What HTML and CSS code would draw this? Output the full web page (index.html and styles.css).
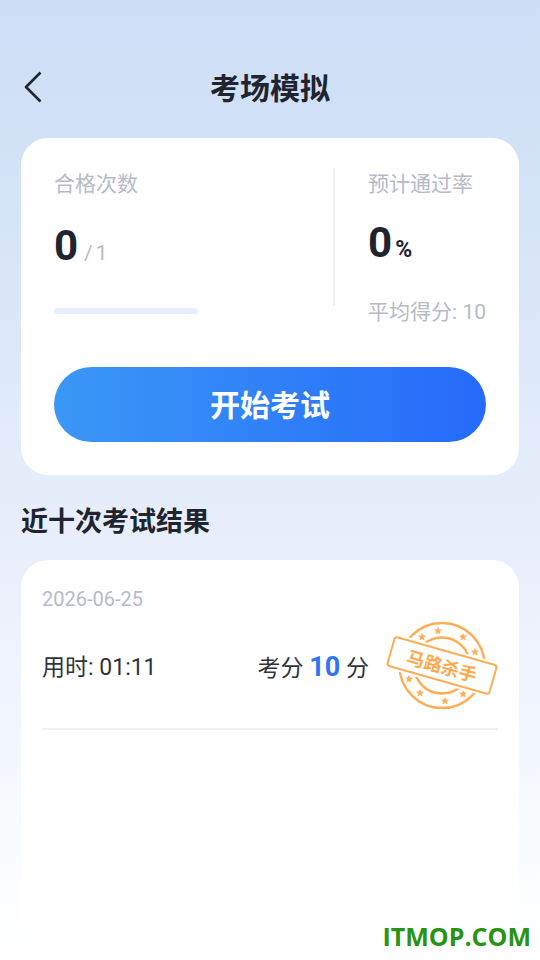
FILE: index.html
```html
<!DOCTYPE html>
<html lang="zh-CN">
<head>
<meta charset="utf-8">
<meta name="viewport" content="width=device-width, initial-scale=1">
<title>考场模拟</title>
<link rel="stylesheet" href="styles.css">
</head>
<body>
<header class="topbar">
  <button class="back" type="button" aria-label="返回">
    <svg width="24" height="34" viewBox="0 0 24 34" fill="none" stroke="currentColor" stroke-width="2.6" stroke-linejoin="round"><path d="M20.5 2.5 6 17l14.5 14.5"/></svg>
  </button>
  <h1 class="title">考场模拟</h1>
</header>
<main class="content">
  <section class="card summary">
    <div class="stats">
      <div class="stat passed">
        <div class="label">合格次数</div>
        <div class="figure"><strong>0</strong><span class="total"><span>/</span><span>1</span></span></div>
        <div class="track"></div>
      </div>
      <div class="stat rate">
        <div class="label">预计通过率</div>
        <div class="figure"><strong>0</strong><span class="unit">%</span></div>
        <div class="label">平均得分: 10</div>
      </div>
    </div>
    <button class="start" type="button">开始考试</button>
  </section>
  <h2 class="heading">近十次考试结果</h2>
  <section class="card results">
    <article class="result">
      <time class="date" datetime="2026-06-25">2026-06-25</time>
      <div class="row">
        <div class="time">用时: 01:11</div>
        <div class="score">考分 <b>10</b> 分</div>
        <svg class="stamp" width="112" height="92" viewBox="0 0 112 92" role="img" aria-label="马路杀手">
          <defs>
            <path id="star" d="M0-3.6 1-1.3 3.5-1.1 1.6.6 2.2 3 0 1.7-2.2 3-1.6.6-3.5-1.1-1-1.3Z"/>
          </defs>
          <g class="ring">
            <circle cx="56" cy="45.5" r="42.5"/>
            <circle cx="56" cy="45.5" r="28"/>
          </g>
          <g class="stars">
            <use href="#star" x="36" y="17"/>
            <use href="#star" x="52" y="11"/>
            <use href="#star" x="77" y="17"/>
            <use href="#star" x="89" y="32"/>
            <use href="#star" x="23" y="59"/>
            <use href="#star" x="34" y="73"/>
            <use href="#star" x="59" y="81"/>
            <use href="#star" x="77" y="74"/>
          </g>
          <g transform="rotate(15.8 56 45.5)">
            <rect class="gap" x="1" y="27.5" width="110" height="36"/>
            <rect class="plate" x="3" y="30.500" width="106" height="30" rx="3"/>
            <text class="verdict" x="56" y="53" text-anchor="middle">马路杀手</text>
          </g>
        </svg>
      </div>
    </article>
  </section>
</main>
<div class="watermark">ITMOP.COM</div>
</body>
</html>
```
FILE: styles.css
```css
* {
  box-sizing: border-box;
}

body {
  margin: 0;
  min-height: 100vh;
  display: flex;
  flex-direction: column;
  background: linear-gradient(#ccddf5 0%, #d3e2f7 16%, #dce8f8 36%, #e4edfa 48%, #e7edfa 54%, #f3f7fe 78%, #fbfdff 92%, #fff 100%);
  color: #20242e;
  font-family: Roboto, "Noto Sans CJK SC", sans-serif;
}

button {
  border: 0;
  padding: 0;
  font-family: inherit;
  cursor: pointer;
}

.topbar {
  display: grid;
  grid-template-columns: 48px 1fr 48px;
  align-items: center;
  height: 102px;
  margin-top: 36px;
}

.back {
  height: 48px;
  padding-left: 20px;
  background: none;
  color: #20242e;
}

.back svg {
  display: block;
}

.title {
  margin: 0;
  padding-top: 3px;
  font-size: 30px;
  line-height: 44px;
  font-weight: 700;
  text-align: center;
}

.content {
  flex: 1;
  display: flex;
  flex-direction: column;
  padding: 0 21px 21px;
}

.card {
  background: #fff;
  border-radius: 27px;
}

.summary {
  padding: 30px 33px 33px;
}

.stats {
  display: flex;
  justify-content: space-between;
}

.passed {
  flex: 1;
  height: 138px;
  border-right: 2px solid #eeeff5;
}

.rate {
  padding-left: 33px;
}

.label {
  color: #b6bac7;
  font-size: 21px;
  line-height: 32px;
}

.figure {
  display: flex;
  align-items: baseline;
  line-height: 48px;
}

.figure strong {
  font-size: 42px;
}

.passed .figure {
  gap: 6px;
  margin: 22px 0 31px;
}

.rate .figure {
  gap: 3px;
  margin: 19px 0 22px;
}

.total {
  display: flex;
  gap: 3px;
  color: #b6bac7;
  font-size: 21px;
}

.unit {
  font-size: 23px;
  font-weight: 700;
}

.track {
  width: 144px;
  height: 6px;
  border-radius: 3px;
  background: #e7efff;
}

.start {
  display: block;
  width: 100%;
  height: 75px;
  margin-top: 39px;
  padding-bottom: 3px;
  border-radius: 38px;
  background: linear-gradient(90deg, #3b97f6, #256af9);
  color: #fff;
  font-size: 30px;
  font-weight: 700;
}

.heading {
  margin: 27px 0 18px;
  font-size: 27px;
  line-height: 40px;
  font-weight: 700;
}

.results {
  flex: 1;
  padding: 24px 21px;
}

.result {
  border-bottom: 2px solid #eeeff5;
  padding-bottom: 16px;
}

.date {
  display: block;
  color: #b6bac7;
  font-size: 20px;
  line-height: 30px;
}

.row {
  display: flex;
  align-items: center;
  margin-top: 6px;
  color: #30333d;
  font-size: 23px;
  line-height: 36px;
}

.time,
.score {
  padding-top: 4px;
}

.time {
  flex: 1;
}

.score b {
  color: #2f73f8;
  font-size: 27px;
}

.stamp {
  margin-left: 17px;
}

.ring {
  fill: none;
  stroke: #ffad55;
  stroke-width: 2.4;
}

.stars {
  fill: #ffad55;
  stroke: #ffad55;
  stroke-width: 0.5;
}

.gap {
  fill: #fff;
}

.plate {
  fill: #fff;
  stroke: #ffad55;
  stroke-width: 2;
}

.verdict {
  fill: #ffa94d;
  font-size: 18px;
  font-weight: 700;
}

.watermark {
  position: absolute;
  right: 9px;
  bottom: 6px;
  color: #289314;
  font-family: "Open Sans", sans-serif;
  font-size: 25px;
  line-height: 36px;
  font-weight: 700;
}
```
